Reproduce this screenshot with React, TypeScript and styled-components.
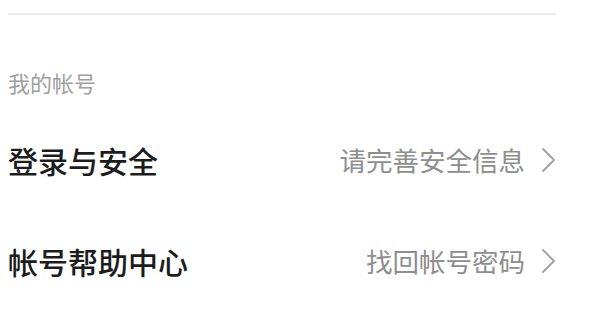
import React from 'react';
import styled, { createGlobalStyle } from 'styled-components';

const GlobalStyle = createGlobalStyle`
  html, body {
    margin: 0;
    padding: 0;
    background: #ffffff;
    font-family: "Noto Sans CJK SC", "Noto Sans", sans-serif;
  }
`;

const Page = styled.div`
  width: 600px;
  height: 314px;
  overflow: hidden;
  padding: 0 44px 0 8px;
  box-sizing: border-box;
`;

const Divider = styled.div`
  margin-top: 13px;
  height: 2px;
  background: #ebebeb;
`;

const SectionTitle = styled.div`
  margin-top: 56px;
  font-size: 22px;
  line-height: 22px;
  color: #a0a0a0;
  margin-bottom: 16px;
`;

const Row = styled.div`
  height: 101px;
  display: flex;
  align-items: center;
  justify-content: space-between;
`;

const Label = styled.span`
  font-size: 30px;
  font-weight: 500;
  color: #1c1c1c;
`;

const Right = styled.div`
  display: flex;
  align-items: center;
  gap: 16px;
`;

const Hint = styled.span`
  font-size: 26.5px;
  color: #8e8e8e;
`;

const Chevron = () => (
  <svg width="15" height="26" viewBox="0 0 15 26" fill="none">
    <polyline points="2,2 13,13 2,24" stroke="#a0a0a0" strokeWidth="1.8" strokeLinecap="round" strokeLinejoin="round" />
  </svg>
);

const rows = [
  { label: '登录与安全', hint: '请完善安全信息' },
  { label: '帐号帮助中心', hint: '找回帐号密码' },
];

export default function App() {
  return (
    <>
      <GlobalStyle />
      <Page>
        <Divider />
        <SectionTitle>我的帐号</SectionTitle>
        {rows.map(r => (
          <Row key={r.label}>
            <Label>{r.label}</Label>
            <Right>
              <Hint>{r.hint}</Hint>
              <Chevron />
            </Right>
          </Row>
        ))}
      </Page>
    </>
  );
}
